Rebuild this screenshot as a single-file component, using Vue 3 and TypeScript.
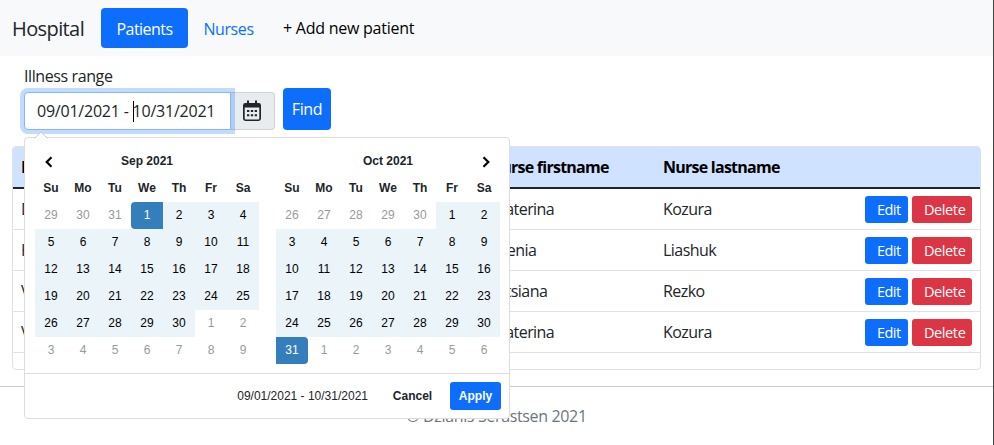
<script setup lang="ts">
interface Patient {
  name: string
  surname: string
  nurseFirst: string
  nurseLast: string
}

interface Day {
  n: number
  state: 'off' | 'in' | 'start' | 'end'
}

const patients: Patient[] = [
  { name: 'Denis', surname: 'Ivanov', nurseFirst: 'Ekaterina', nurseLast: 'Kozura' },
  { name: 'Kirill', surname: 'Orlov', nurseFirst: 'Zhenia', nurseLast: 'Liashuk' },
  { name: 'Vadim', surname: 'Petrov', nurseFirst: 'Tatsiana', nurseLast: 'Rezko' },
  { name: 'Viktor', surname: 'Sidorov', nurseFirst: 'Ekaterina', nurseLast: 'Kozura' },
]

const weekdays = ['Su', 'Mo', 'Tu', 'We', 'Th', 'Fr', 'Sa']

// Six weeks of cells: tail of the previous month, the month, head of the next one.
function buildDays(prevLast: number, lead: number, length: number, selected: number, kind: 'start' | 'end'): Day[] {
  const days: Day[] = []
  for (let i = 0; i < 42; i++) {
    const d = i - lead + 1
    if (d < 1) days.push({ n: prevLast + d, state: 'off' })
    else if (d > length) days.push({ n: d - length, state: 'off' })
    else days.push({ n: d, state: d === selected ? kind : 'in' })
  }
  return days
}

const months = [
  { title: 'Sep 2021', side: 'left', days: buildDays(31, 3, 30, 1, 'start') },
  { title: 'Oct 2021', side: 'right', days: buildDays(30, 5, 31, 31, 'end') },
]
</script>

<template>
  <div class="page">
    <nav class="navbar">
      <span class="brand">Hospital</span>
      <a class="pill active">Patients</a>
      <a class="pill nurses">Nurses</a>
      <a class="add">+ Add new patient</a>
    </nav>

    <form class="search">
      <div class="field">
        <label class="label">Illness range</label>
        <div class="group">
          <div class="input"><span>09/01/2021 - </span><i class="caret"></i><span>10/31/2021</span></div>
          <span class="addon">
            <svg width="20" height="22" viewBox="0 0 20 22">
              <path fill="#212529" fill-rule="evenodd" d="M5 0.6h2V3h6V0.6h2V3h1.5A2.4 2.4 0 0 1 19 5.4v13.2A2.4 2.4 0 0 1 16.6 21H3.4A2.4 2.4 0 0 1 1 18.600V5.400A2.400 2.400 0 0 1 3.400 3H5zM2.700 7.500v10.900q0 1 1 1h12.600q1 0 1-1V7.500z" />
              <path fill="#212529" d="M5 10h2.300v2H5zM8.850 10h2.300v2h-2.300zM12.700 10H15v2h-2.300zM5 14.200h2.300v2H5zM8.850 14.200h2.300v2h-2.300zM12.700 14.200H15v2h-2.300z" />
            </svg>
          </span>
        </div>

        <div class="picker">
          <svg class="arrow" width="14" height="8" viewBox="0 0 14 8">
            <path d="M0.500 7.500L7 1l6.500 6.500V8H0.500z" fill="#fff" />
            <path d="M0.500 7.500L7 1l6.500 6.500" fill="none" stroke="#ccc" />
          </svg>
          <div class="calendars">
            <section v-for="m in months" :key="m.title" class="month">
              <header class="month-head">
                <span class="nav-cell">
                  <svg v-if="m.side === 'left'" width="10" height="12" viewBox="0 0 10 12"><path d="M7.500 1.200L2.700 6l4.800 4.800" /></svg>
                </span>
                <b class="title">{{ m.title }}</b>
                <span class="nav-cell">
                  <svg v-if="m.side === 'right'" width="10" height="12" viewBox="0 0 10 12"><path d="M2.500 1.200L7.300 6l-4.800 4.800" /></svg>
                </span>
              </header>
              <div class="grid">
                <b v-for="w in weekdays" :key="w" class="cell">{{ w }}</b>
                <span v-for="(d, i) in m.days" :key="i" class="cell" :class="d.state">{{ d.n }}</span>
              </div>
            </section>
          </div>
          <div class="actions">
            <span class="selected">09/01/2021 - 10/31/2021</span>
            <button type="button" class="small">Cancel</button>
            <button type="button" class="small apply">Apply</button>
          </div>
        </div>
      </div>
      <button type="button" class="find">Find</button>
    </form>

    <div class="card">
      <table class="table">
        <colgroup>
          <col class="c1" /><col class="c2" /><col class="c3" /><col class="c4" /><col />
        </colgroup>
        <thead>
          <tr><th>Firstname</th><th>Lastname</th><th>Nurse firstname</th><th>Nurse lastname</th><th></th></tr>
        </thead>
        <tbody>
          <tr v-for="(p, i) in patients" :key="i">
            <td>{{ p.name }}</td>
            <td>{{ p.surname }}</td>
            <td>{{ p.nurseFirst }}</td>
            <td>{{ p.nurseLast }}</td>
            <td class="ops"><div class="btns"><a class="btn edit">Edit</a><a class="btn delete">Delete</a></div></td>
          </tr>
        </tbody>
      </table>
    </div>

    <footer class="footer">© Dzianis Serastsen 2021</footer>
  </div>
</template>

<style>
body {
  overflow: hidden;
  background: #fff;
}
</style>

<style scoped>
.page {
  box-sizing: border-box;
  height: 445px;
  border-right: 1px solid #444;
  font: 16px/24px 'Open Sans', 'Noto Sans', sans-serif;
  letter-spacing: -0.4px;
  color: #212529;
  overflow: hidden;
}
.page * {
  box-sizing: border-box;
}
.navbar {
  display: flex;
  align-items: center;
  height: 56px;
  padding-left: 12px;
  background: #f8f9fa;
  white-space: nowrap;
}
.brand {
  width: 89px;
  padding-top: 2px;
  font-size: 20px;
  line-height: 30px;
  letter-spacing: -0.6px;
}
.pill {
  padding: 9px 0 7px;
  width: 87px;
  text-align: center;
  color: #0d6efd;
  border-radius: 4px;
}
.pill.active {
  background: #0d6efd;
  color: #fff;
  letter-spacing: -0.55px;
}
.pill.nurses {
  width: 81px;
}
.add {
  padding: 0 0 1px 14px;
  color: #000;
  letter-spacing: -0.25px;
}
.search {
  display: flex;
  align-items: flex-end;
  gap: 8px;
  height: 74px;
  padding-left: 24px;
}
.field {
  position: relative;
  width: 251px;
}
.label {
  display: block;
  height: 28px;
}
.group {
  display: flex;
  height: 38px;
}
.input {
  position: relative;
  z-index: 1;
  display: flex;
  align-items: center;
  width: 207px;
  padding-left: 12px;
  border: 1px solid #86b7fe;
  border-radius: 4px 0 0 4px;
  background: #fff;
  box-shadow: 0 0 0 4px rgba(13, 110, 253, 0.25);
  letter-spacing: -0.22px;
  white-space: pre;
}
.caret {
  width: 1px;
  height: 21px;
  margin-right: -1px;
  background: #000;
}
.addon {
  display: flex;
  align-items: center;
  justify-content: center;
  width: 44px;
  padding-right: 2px;
  background: #e9ecef;
  border: 1px solid #ced4da;
  border-left: 0;
  border-radius: 0 4px 4px 0;
}
.find {
  width: 48px;
  height: 42px;
  padding: 0;
  border: 0;
  border-radius: 4px;
  background: #0d6efd;
  color: #fff;
  font: inherit;
  letter-spacing: inherit;
}
.card {
  height: 224px;
  margin: 16px 12px 0;
  border: 1px solid #dee2e6;
  border-radius: 4px;
  overflow: hidden;
}
.table {
  width: 100%;
  table-layout: fixed;
  border-collapse: separate;
  border-spacing: 0;
}
.c1 { width: 234px; }
.c2 { width: 234px; }
.c3 { width: 174px; }
.c4 { width: 174px; }
th {
  height: 42px;
  padding: 0 8px;
  text-align: left;
  color: #000;
  background: #cfe2ff;
  border-bottom: 2px solid #212529;
  letter-spacing: -0.75px;
}
td {
  height: 41px;
  padding: 0 8px;
  border-bottom: 1px solid #dee2e6;
  letter-spacing: -0.55px;
}
.btns {
  display: flex;
  justify-content: flex-end;
  gap: 4px;
}
.btn {
  height: 27px;
  padding-left: 12px;
  border-radius: 3px;
  color: #fff;
  font-size: 14.5px;
  line-height: 28px;
  white-space: nowrap;
}
.edit {
  width: 43px;
  background: #0d6efd;
}
.delete {
  width: 60px;
  background: #dc3545;
  letter-spacing: -0.4px;
}
.footer {
  margin-top: 16px;
  padding-top: 17px;
  border-top: 1px solid #c8c9ca;
  text-align: center;
  color: #6c757d;
  letter-spacing: -0.35px;
}
.picker {
  position: absolute;
  top: 73px;
  left: 0;
  width: 486px;
  height: 282px;
  background: #fff;
  border: 1px solid #ddd;
  border-radius: 4px;
  font: 12px/27px 'Liberation Sans', Arial, sans-serif;
  letter-spacing: 0;
  z-index: 2;
}
.arrow {
  position: absolute;
  top: -7px;
  left: 9px;
}
.calendars {
  display: flex;
  justify-content: space-between;
  height: 235px;
  padding: 10px 9px 0 10px;
}
.month {
  width: 224px;
}
.month-head {
  display: flex;
  height: 27px;
}
.nav-cell {
  display: flex;
  align-items: center;
  justify-content: center;
  width: 28px;
}
.nav-cell path {
  fill: none;
  stroke: #000;
  stroke-width: 2.2;
}
.title {
  flex: 1;
  text-align: center;
}
.grid {
  display: grid;
  grid-template-columns: repeat(7, 32px);
  grid-auto-rows: 27px;
  text-align: center;
}
.off { color: #999; }
.in {
  color: #000;
  background: #ebf4f8;
}
.start, .end {
  color: #fff;
  background: #357ebd;
}
.start { border-radius: 4px 0 0 4px; }
.end { border-radius: 0 4px 4px 0; }
.actions {
  display: flex;
  align-items: center;
  justify-content: flex-end;
  height: 45px;
  padding-right: 8px;
  border-top: 1px solid #ddd;
}
.small {
  width: 57px;
  height: 28px;
  padding: 0;
  border: 0;
  border-radius: 3px;
  background: none;
  color: #212529;
  font: bold 12px/28px 'Liberation Sans', Arial, sans-serif;
}
.selected {
  margin-right: 16px;
}
.apply {
  width: 51px;
  margin-left: 9px;
  background: #0d6efd;
  color: #fff;
}
</style>
